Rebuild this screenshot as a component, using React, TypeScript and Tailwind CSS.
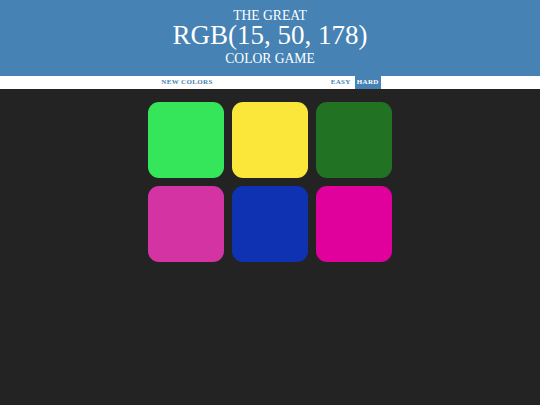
const squares = ["#35e65a", "#fbe73a", "#217222", "#d333a3", "#0f32b2", "#e0009c"];

export default function App() {
  return (
    <div className="min-h-[405px] w-full bg-[#232323] font-['Liberation_Serif',serif]">
      <h1 className="bg-[#4682b4] pt-[8px] pb-[7px] text-center font-normal uppercase text-white">
        <span className="block text-[13.6px] leading-[15px]">The Great</span>
        <span className="block text-[27px] leading-[25px]">RGB(15, 50, 178)</span>
        <span className="block text-[13.6px] leading-[21px]">Color Game</span>
      </h1>
      <div className="flex h-[13px] justify-center bg-white text-[7px] font-bold uppercase tracking-[0.35px] text-[#4682b4]">
        <button className="h-full px-[2px] uppercase">New Colors</button>
        <span className="w-[114px]" />
        <button className="h-full px-[2px] uppercase">Easy</button>
        <button className="ml-[2px] h-full bg-[#4682b4] px-[2px] uppercase text-white">Hard</button>
      </div>
      <div className="mx-auto mt-[13px] grid w-[244px] grid-cols-3 gap-[8px]">
        {squares.map((color) => (
          <div key={color} className="h-[76px] rounded-[11px]" style={{ backgroundColor: color }} />
        ))}
      </div>
    </div>
  );
}
